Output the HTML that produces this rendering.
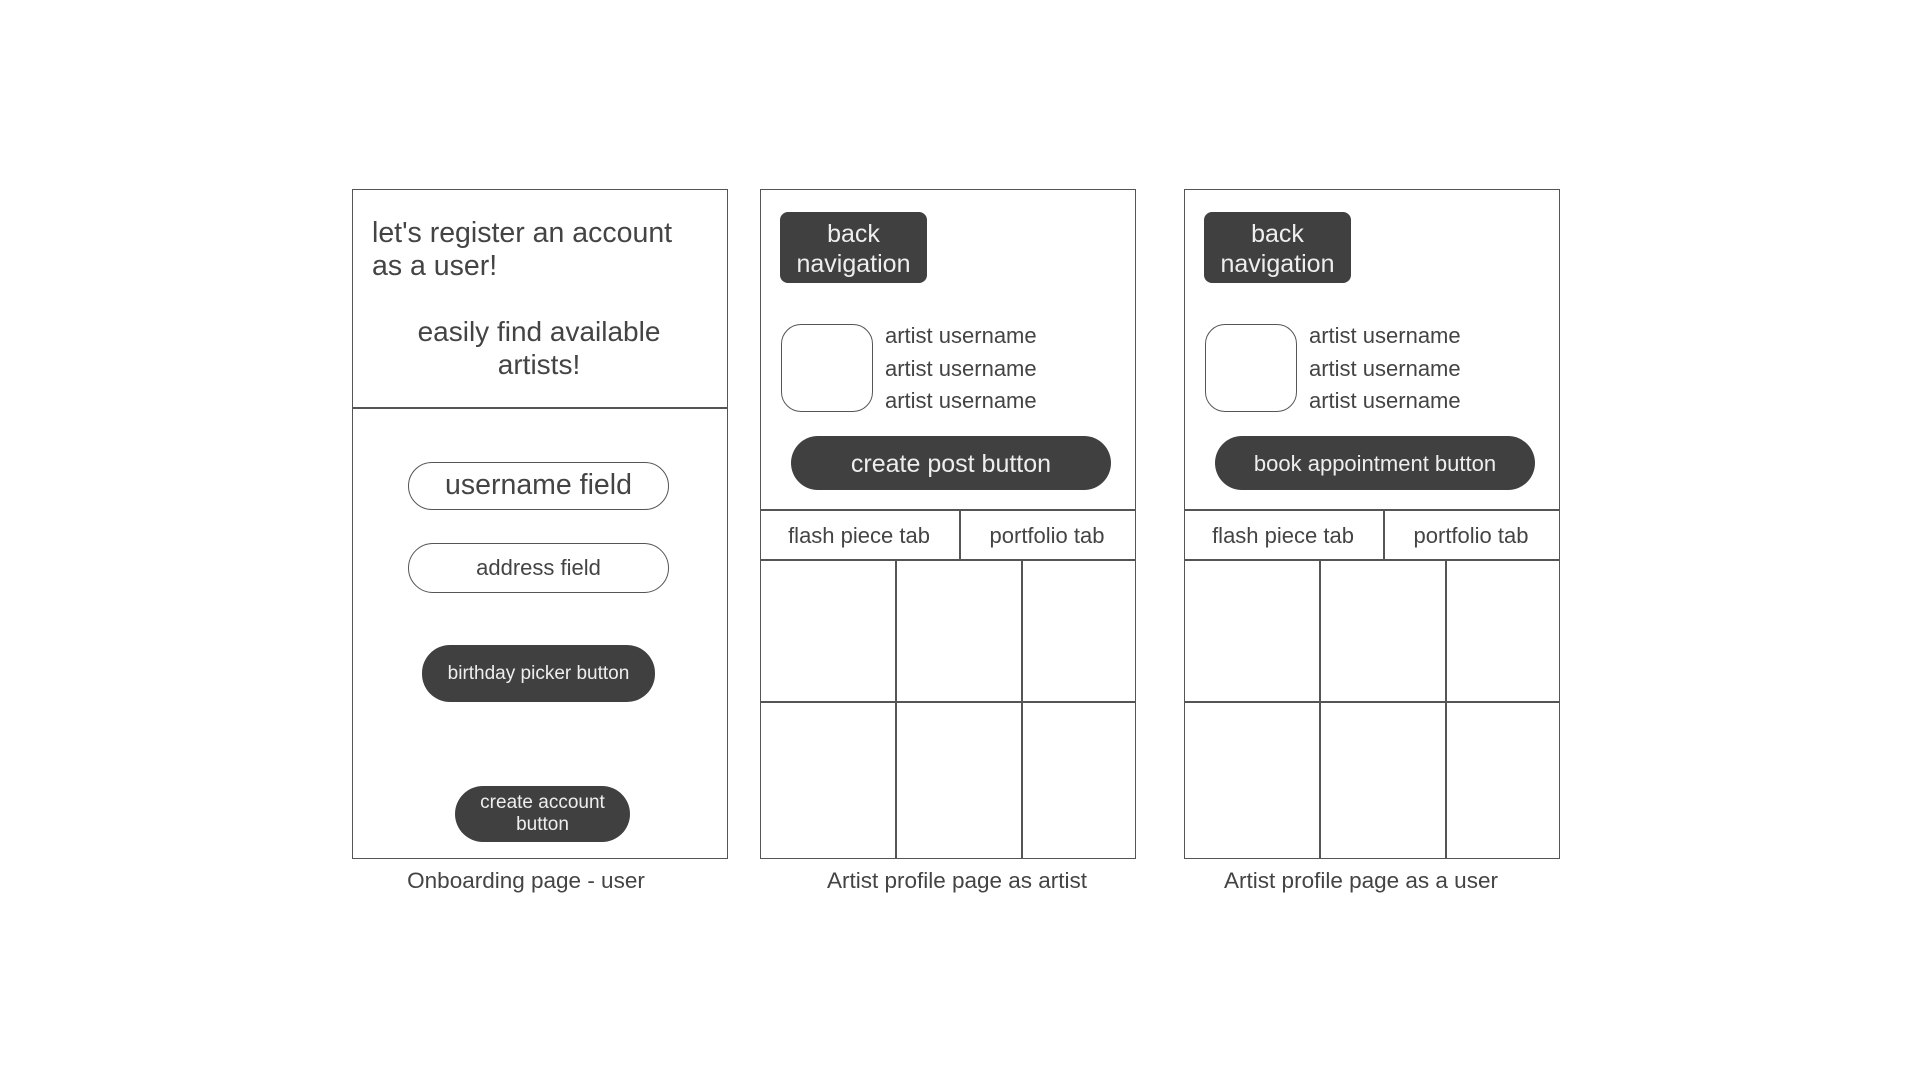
<!DOCTYPE html>
<html><head><meta charset="utf-8"><style>
*{margin:0;padding:0;box-sizing:border-box}
body{width:1920px;height:1080px;background:#fff;position:relative;overflow:hidden;font-family:"Liberation Sans",sans-serif;color:#444}
.a{position:absolute}
.f{border:1.5px solid #555;background:#fff}
.l{background:#555}
.btn{background:#404040;color:#eee;display:flex;align-items:center;justify-content:center;text-align:center}
.t{white-space:nowrap}
.c{text-align:center;transform:translateX(-50%)}
</style></head><body>
<!-- frame 1 -->
<div class="a f" style="left:352px;top:189px;width:376px;height:670px"></div>
<div class="a l" style="left:352px;top:407px;width:376px;height:1.5px"></div>
<div class="a t" style="left:372px;top:217px;font-size:28.5px;line-height:33px">let's register an account<br>as a user!</div>
<div class="a t c" style="left:539px;top:315px;font-size:28px;line-height:33px">easily find available<br>artists!</div>
<div class="a f" style="left:408px;top:462px;width:261px;height:48px;border-radius:24px;display:flex;align-items:center;justify-content:center;font-size:28.5px;padding-bottom:2px">username field</div>
<div class="a f" style="left:408px;top:543px;width:261px;height:50px;border-radius:25px;display:flex;align-items:center;justify-content:center;font-size:22px">address field</div>
<div class="a btn" style="left:422px;top:645px;width:233px;height:57px;border-radius:28px;font-size:19px">birthday picker button</div>
<div class="a btn" style="left:455px;top:786px;width:175px;height:56px;border-radius:28px;font-size:19px;line-height:22px">create account<br>button</div>
<div class="a t c" style="left:526px;top:868px;font-size:22.5px">Onboarding page - user</div>

<!-- frame 2 -->
<div class="a f" style="left:760px;top:189px;width:376px;height:670px"></div>
<div class="a btn" style="left:780px;top:212px;width:147px;height:71px;border-radius:8px;font-size:25px;line-height:30px;padding-top:3px">back<br>navigation</div>
<div class="a f" style="left:781px;top:324px;width:92px;height:88px;border-radius:20px"></div>
<div class="a t" style="left:885px;top:320px;font-size:22px;line-height:32.5px">artist username<br>artist username<br>artist username</div>
<div class="a btn" style="left:791px;top:436px;width:320px;height:54px;border-radius:27px;font-size:25px;padding-top:3px">create post button</div>
<div class="a l" style="left:760px;top:509px;width:376px;height:1.5px"></div>
<div class="a l" style="left:760px;top:559px;width:376px;height:1.5px"></div>
<div class="a l" style="left:760px;top:701px;width:376px;height:1.5px"></div>
<div class="a l" style="left:959px;top:509px;width:1.5px;height:51px"></div>
<div class="a l" style="left:895px;top:559px;width:1.5px;height:300px"></div>
<div class="a l" style="left:1021px;top:559px;width:1.5px;height:300px"></div>
<div class="a t c" style="left:859px;top:523px;font-size:22px">flash piece tab</div>
<div class="a t c" style="left:1047px;top:523px;font-size:22px">portfolio tab</div>
<div class="a t c" style="left:957px;top:868px;font-size:22.5px">Artist profile page as artist</div>

<!-- frame 3 -->
<div class="a f" style="left:1184px;top:189px;width:376px;height:670px"></div>
<div class="a btn" style="left:1204px;top:212px;width:147px;height:71px;border-radius:8px;font-size:25px;line-height:30px;padding-top:3px">back<br>navigation</div>
<div class="a f" style="left:1205px;top:324px;width:92px;height:88px;border-radius:20px"></div>
<div class="a t" style="left:1309px;top:320px;font-size:22px;line-height:32.5px">artist username<br>artist username<br>artist username</div>
<div class="a btn" style="left:1215px;top:436px;width:320px;height:54px;border-radius:27px;font-size:22px;padding-top:2px">book appointment button</div>
<div class="a l" style="left:1184px;top:509px;width:376px;height:1.5px"></div>
<div class="a l" style="left:1184px;top:559px;width:376px;height:1.5px"></div>
<div class="a l" style="left:1184px;top:701px;width:376px;height:1.5px"></div>
<div class="a l" style="left:1383px;top:509px;width:1.5px;height:51px"></div>
<div class="a l" style="left:1319px;top:559px;width:1.5px;height:300px"></div>
<div class="a l" style="left:1445px;top:559px;width:1.5px;height:300px"></div>
<div class="a t c" style="left:1283px;top:523px;font-size:22px">flash piece tab</div>
<div class="a t c" style="left:1471px;top:523px;font-size:22px">portfolio tab</div>
<div class="a t c" style="left:1361px;top:868px;font-size:22.5px">Artist profile page as a user</div>
</body></html>
